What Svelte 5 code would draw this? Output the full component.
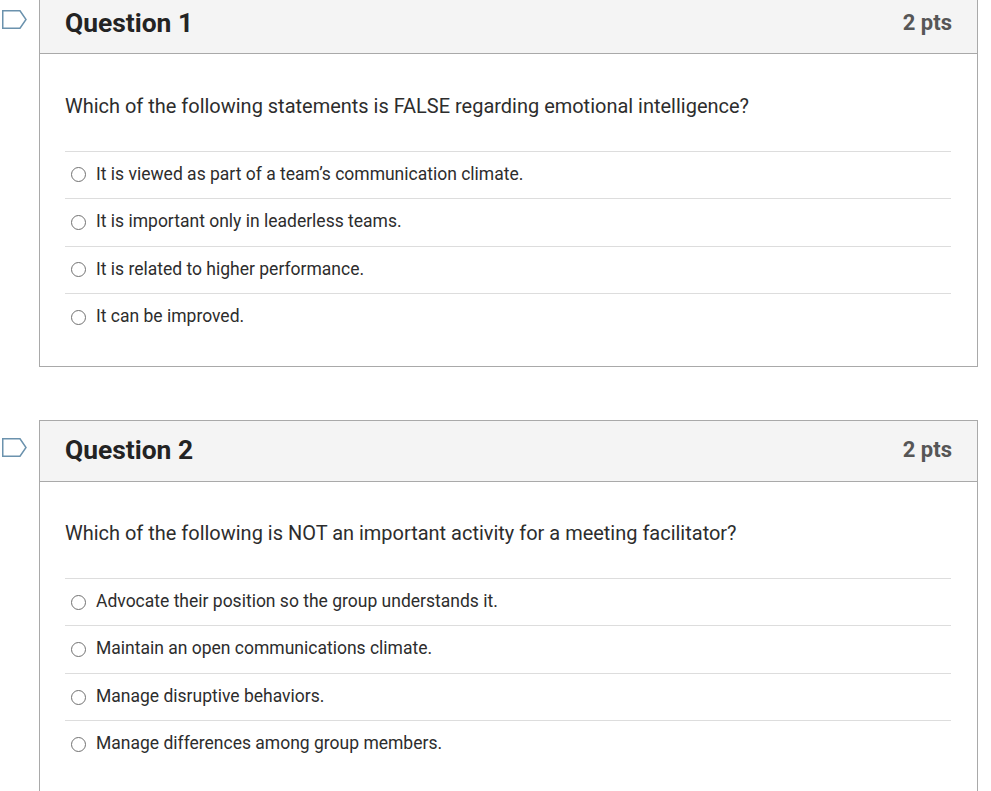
<script>
    const questions = [
        {
            title: 'Question 1',
            points: '2 pts',
            text: 'Which of the following statements is FALSE regarding emotional intelligence?',
            answers: [
                'It is viewed as part of a team’s communication climate.',
                'It is important only in leaderless teams.',
                'It is related to higher performance.',
                'It can be improved.'
            ]
        },
        {
            title: 'Question 2',
            points: '2 pts',
            text: 'Which of the following is NOT an important activity for a meeting facilitator?',
            answers: [
                'Advocate their position so the group understands it.',
                'Maintain an open communications climate.',
                'Manage disruptive behaviors.',
                'Manage differences among group members.'
            ]
        }
    ];
</script>

<div class="page">
    <div class="list">
        {#each questions as q}
            <div class="question">
                <svg class="flag" width="27" height="21" viewBox="0 0 27 21">
                    <path d="M2.75 1.75H20L26 10.5L20 19.25H2.75Z" fill="#fff" stroke="#6b92ad" stroke-width="1.5" />
                </svg>
                <div class="card">
                    <div class="head">
                        <h2>{q.title}</h2>
                        <span class="pts">{q.points}</span>
                    </div>
                    <div class="body">
                        <p>{q.text}</p>
                        <div class="answers">
                            {#each q.answers as a}
                                <label class="answer">
                                    <span class="radio"></span>
                                    <span class="label">{a}</span>
                                </label>
                            {/each}
                        </div>
                    </div>
                </div>
            </div>
        {/each}
    </div>
</div>

<style>
    :global(body) {
        background: #fff;
    }

    .page {
        height: 791px;
        overflow: hidden;
        font-family: Roboto, sans-serif;
        color: #2d2d2d;
    }

    .list {
        display: flex;
        flex-direction: column;
        gap: 53px;
        margin-top: -7.6px;
        padding-left: 39px;
        width: 939px;
    }

    .question {
        position: relative;
    }

    .flag {
        position: absolute;
        left: -39px;
        top: 17px;
    }

    .card {
        border: 1px solid #a9a9a9;
    }

    .head {
        display: flex;
        align-items: center;
        justify-content: space-between;
        height: 60px;
        padding: 0 25px;
        background: #f4f4f4;
        border-bottom: 1px solid #a9a9a9;
    }

    h2 {
        margin: 0 0 0.6px;
        font-size: 26.4px;
        font-weight: 700;
        color: #232323;
    }

    .pts {
        margin-bottom: 2px;
        font-size: 22px;
        font-weight: 700;
        color: #565656;
    }

    .body {
        padding: 37.8px 26px 25px 25px;
    }

    p {
        margin: 0 0 30.4px;
        font-size: 19.985px;
        line-height: 28px;
    }

    .answer {
        display: flex;
        align-items: center;
        gap: 10px;
        height: 46.5px;
        padding-left: 6px;
        border-top: 1px solid #ddd;
        font-size: 17.5px;
    }

    .label {
        padding-bottom: 2.6px;
    }

    .radio {
        box-sizing: border-box;
        width: 15px;
        height: 15px;
        border: 1.5px solid #717171;
        border-radius: 50%;
    }
</style>
